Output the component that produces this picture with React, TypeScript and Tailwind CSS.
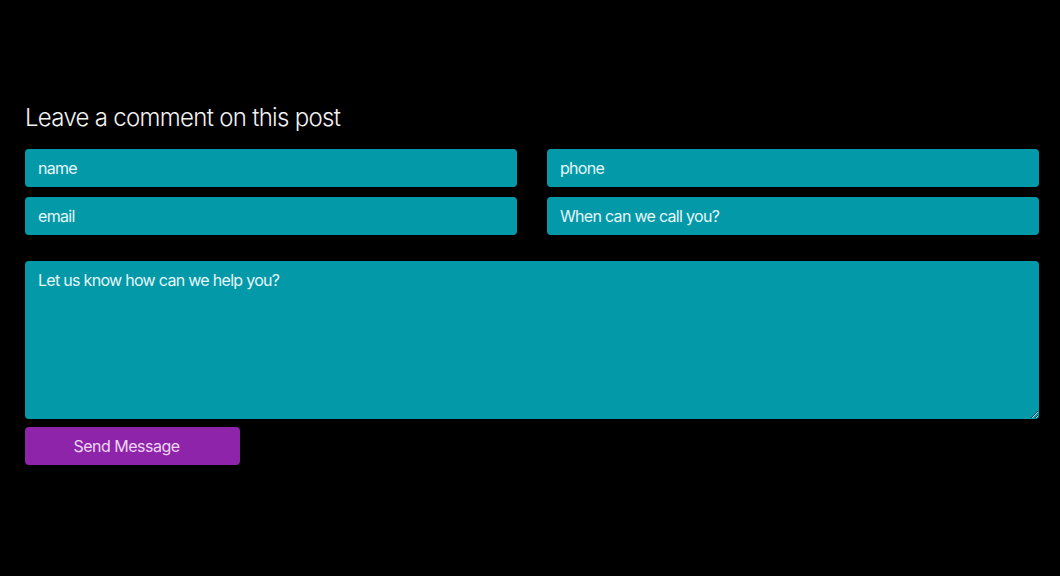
export default function App() {
  const field =
    "h-[38px] w-full rounded-[4px] bg-[#0399a8] px-[13px] text-[16px] text-white outline-none placeholder:text-[#e6f6f8] tracking-[-0.7px]";

  return (
    <div
      className="min-h-[576px] w-full bg-black pl-[25px] pr-[21px] pt-[101px] pb-[20px]"
      style={{ fontFamily: "Inter, 'Noto Sans', sans-serif" }}
    >
      <h2 className="mb-[14px] text-[24px] font-light leading-[34px] tracking-[-0.7px] text-[#f2f2f2]">
        Leave a comment on this post
      </h2>

      <form className="flex flex-col" onSubmit={(e) => e.preventDefault()}>
        <div className="grid grid-cols-2 gap-x-[30px] gap-y-[10px]">
          <input className={field} placeholder="name" />
          <input className={field} placeholder="phone" />
          <input className={field} placeholder="email" />
          <input className={field} placeholder="When can we call you?" />
        </div>

        <textarea
          className="mt-[26px] h-[158px] w-full rounded-[4px] bg-[#0399a8] px-[13px] py-[7px] text-[16px] tracking-[-0.7px] text-white outline-none placeholder:text-[#e6f6f8]"
          placeholder="Let us know how can we help you?"
        />

        <button
          type="submit"
          className="mt-[8px] h-[38px] w-[215px] rounded-[4px] bg-[#8e24aa] pr-[12px] text-[16px] tracking-[-0.5px] text-[#ecd7f2]"
        >
          Send Message
        </button>
      </form>
    </div>
  );
}
